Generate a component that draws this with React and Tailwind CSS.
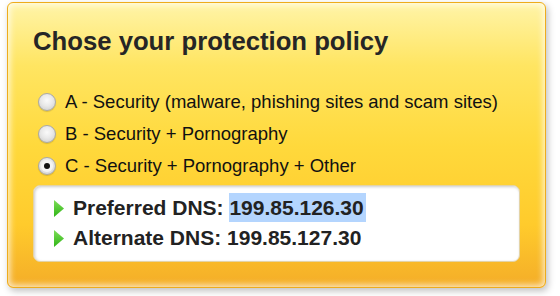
import React from "react";

function Radio({ checked }) {
  return (
    <span className="relative flex h-[18px] w-[18px] shrink-0 items-center justify-center rounded-full border border-[#a9a9a9] bg-[radial-gradient(circle_at_50%_40%,#fafafa_0%,#e9e9e9_45%,#c9c9c9_100%)] shadow-[0_1px_1px_rgba(0,0,0,0.15)]">
      {checked && (
        <span className="flex h-[12px] w-[12px] items-center justify-center rounded-full bg-[#f4f4f4]">
          <span className="h-[6px] w-[6px] rounded-full bg-[#111]" />
        </span>
      )}
    </span>
  );
}

function Arrow() {
  return (
    <svg width="10" height="17" viewBox="0 0 10 17" className="shrink-0">
      <defs>
        <linearGradient id="ga" x1="0" y1="0" x2="0" y2="1">
          <stop offset="0" stopColor="#7ede58" />
          <stop offset="1" stopColor="#2fb416" />
        </linearGradient>
      </defs>
      <polygon points="0,0 10,8.5 0,17" fill="url(#ga)" />
    </svg>
  );
}

export default function App() {
  const options = [
    { label: "A - Security (malware, phishing sites and scam sites)", checked: false },
    { label: "B - Security + Pornography", checked: false },
    { label: "C - Security + Pornography + Other", checked: true },
  ];
  return (
    <div className="h-[296px] w-[560px] bg-white pl-[7px] pt-[2px]" style={{ fontFamily: '"Liberation Sans", Arial, sans-serif' }}>
      <div className="flex h-[286px] w-[539px] flex-col rounded-[6px] border border-[#eeac1c] bg-[linear-gradient(180deg,#fff4a8_0%,#ffe562_22%,#ffd93c_50%,#ffcb2c_78%,#f4ad28_100%)] px-[25px] pt-[23px] shadow-[inset_0_0_6px_2px_rgba(255,255,255,0.75),2px_3px_7px_rgba(0,0,0,0.25)]">
        <h1 className="text-[25.7px] font-bold leading-[30px] text-[#262626]">Chose your protection policy</h1>
        <div className="mt-[30px] flex flex-col">
          {options.map((o) => (
            <div key={o.label} className="flex h-[32px] items-center pl-[5px]">
              <Radio checked={o.checked} />
              <span className="ml-[9px] text-[18.5px] leading-[32px] text-[#111]">{o.label}</span>
            </div>
          ))}
        </div>
        <div className="mt-[3px] flex h-[77px] flex-col rounded-[7px] border border-[#e3d3a6] bg-white pl-[20px] pt-[7px] shadow-[inset_1px_1px_3px_rgba(0,0,0,0.2)]">
          <div className="flex h-[30px] items-center">
            <Arrow />
            <span className="ml-[9px] whitespace-pre text-[21px] font-bold leading-[30px] text-[#222]">
              Preferred DNS:{" "}
              <span className="inline-block h-[29px] bg-[#b4d5fe] pr-[2px] leading-[29px]">199.85.126.30</span>
            </span>
          </div>
          <div className="flex h-[30px] items-center">
            <Arrow />
            <span className="ml-[9px] text-[21px] font-bold leading-[30px] text-[#222]">Alternate DNS: 199.85.127.30</span>
          </div>
        </div>
      </div>
    </div>
  );
}
